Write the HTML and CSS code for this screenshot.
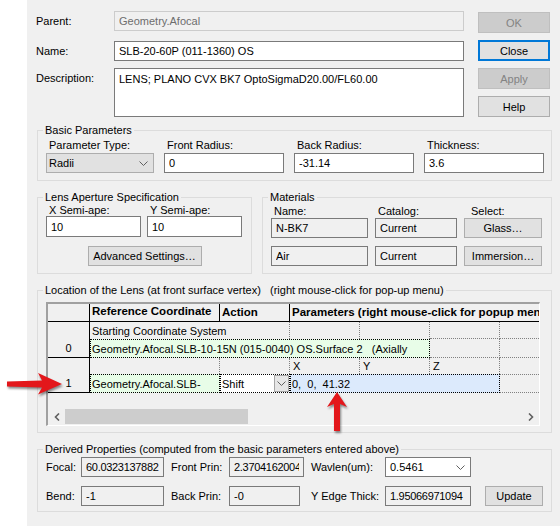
FILE: index.html
```html
<!DOCTYPE html>
<html lang="en">
    <head>
        <meta charset="UTF-8">
        <meta name="viewport" content="width=device-width, initial-scale=1.0">
        <title>Lens Properties</title>
        <link rel="stylesheet" href="styles.css">
    </head>
    <body>
        <div class="page">
            <div class="dialog">
                <div class="top">
                    <div class="fields">
                        <div class="row">
                            <label class="lbl">Parent:</label>
                            <input class="edit off" value="Geometry.Afocal" disabled>
                        </div>
                        <div class="row gap-name">
                            <label class="lbl">Name:</label>
                            <input class="edit" value="SLB-20-60P (011-1360) OS">
                        </div>
                        <div class="row gap-desc">
                            <label class="lbl">Description:</label>
                            <textarea class="edit memo">LENS; PLANO CVX BK7 OptoSigmaD20.00/FL60.00</textarea>
                        </div>
                    </div>
                    <div class="buttons">
                        <button class="btn" disabled>OK</button>
                        <button class="btn default">Close</button>
                        <button class="btn" disabled>Apply</button>
                        <button class="btn">Help</button>
                    </div>
                </div>

                <div class="groups">
                    <!-- basic parameters -->
                    <div class="group basic">
                        <div class="legend">Basic Parameters</div>
                        <div class="basic-grid">
                            <div class="cap">Parameter Type:</div>
                            <div class="cap">Front Radius:</div>
                            <div class="cap">Back Radius:</div>
                            <div class="cap">Thickness:</div>
                            <div class="combo">
                                <span>Radii</span>
                                <svg class="chev" viewBox="0 0 9 5"><polyline points="0.5,0.5 4.5,4.5 8.5,0.5" fill="none" stroke="#606060"/></svg>
                            </div>
                            <input class="edit" value="0">
                            <input class="edit" value="-31.14">
                            <input class="edit" value="3.6">
                        </div>
                    </div>

                    <div class="pair">
                        <div class="group aperture">
                            <div class="legend">Lens Aperture Specification</div>
                            <div class="ap-grid">
                                <div class="cap">X Semi-ape:</div>
                                <div class="cap">Y Semi-ape:</div>
                                <input class="edit" value="10">
                                <input class="edit" value="10">
                            </div>
                            <button class="btn wide-btn">Advanced Settings…</button>
                        </div>
                        <div class="group materials">
                            <div class="legend">Materials</div>
                            <div class="mat-grid">
                                <div class="cap">Name:</div>
                                <div class="cap">Catalog:</div>
                                <div class="cap sel-cap">Select:</div>
                                <input class="edit ro" value="N-BK7" readonly>
                                <input class="edit ro" value="Current" readonly>
                                <button class="btn">Glass…</button>
                                <input class="edit ro second" value="Air" readonly>
                                <input class="edit ro second" value="Current" readonly>
                                <button class="btn second">Immersion…</button>
                            </div>
                        </div>
                    </div>

                    <!-- location grid -->
                    <div class="group location">
                        <div class="legend">Location of the Lens (at front surface vertex)   (right mouse-click for pop-up menu)</div>
                        <div class="grid">
                            <div class="cells">
                                <div class="hc"></div>
                                <div class="hc">Reference Coordinate</div>
                                <div class="hc mid">Action</div>
                                <div class="hc mid span4 last">Parameters (right mouse-click for popup menu)</div>

                                <div class="rh rh0">0</div>
                                <div class="dc span2 gr-r">Starting Coordinate System</div>
                                <div class="dc gr-r"></div>
                                <div class="dc gr-r"></div>
                                <div class="dc gr-r gr-b"></div>
                                <div class="dc gr-b"></div>

                                <div class="dc span4 sel green">Geometry.Afocal.SLB-10-15N (015-0040) OS.Surface 2   (Axially</div>
                                <div class="dc gr-r gr-b"></div>
                                <div class="dc gr-b"></div>

                                <div class="rh rh1">1</div>
                                <div class="dc gr-r"></div>
                                <div class="dc gr-r"></div>
                                <div class="dc gr-r pad3">X</div>
                                <div class="dc gr-r pad3">Y</div>
                                <div class="dc gr-r pad3">Z</div>
                                <div class="dc"></div>

                                <div class="dc sel green">Geometry.Afocal.SLB-</div>
                                <div class="dc sel white shift">
                                    <span>Shift</span>
                                    <span class="drop"><svg class="chev" viewBox="0 0 9 5"><polyline points="0.5,0.5 4.5,4.5 8.5,0.5" fill="none" stroke="#606060"/></svg></span>
                                </div>
                                <div class="dc span3 sel blue">0,&nbsp; 0,&nbsp; 41.32</div>
                                <div class="dc gr-t gr-b"></div>
                            </div>
                            <div class="hscroll">
                                <span class="sb-arrow"><svg width="6" height="8" viewBox="0 0 6 8"><polyline points="5,0.5 1.5,4 5,7.5" fill="none" stroke="#606060" stroke-width="1.6"/></svg></span>
                                <span class="thumb"></span>
                                <span class="sb-fill"></span>
                                <span class="sb-arrow"><svg width="6" height="8" viewBox="0 0 6 8"><polyline points="1,0.5 4.5,4 1,7.5" fill="none" stroke="#606060" stroke-width="1.6"/></svg></span>
                            </div>
                        </div>
                    </div>

                    <!-- derived -->
                    <div class="group derived">
                        <div class="legend">Derived Properties (computed from the basic parameters entered above)</div>
                        <div class="dv-grid">
                            <div class="dl">Focal:</div>
                            <input class="edit ro tight" value="60.0323137882" readonly>
                            <div class="dl pl">Front Prin:</div>
                            <input class="edit ro tight" value="2.37041620044" readonly>
                            <div class="dl pl">Wavlen(um):</div>
                            <div class="combo white">
                                <span>0.5461</span>
                                <svg class="chev" viewBox="0 0 9 5"><polyline points="0.5,0.5 4.5,4.5 8.5,0.5" fill="none" stroke="#606060"/></svg>
                            </div>

                            <div class="dl new-row">Bend:</div>
                            <input class="edit ro" value="-1" readonly>
                            <div class="dl pl">Back Prin:</div>
                            <input class="edit ro short" value="-0" readonly>
                            <div class="dl pl">Y Edge Thick:</div>
                            <input class="edit ro tight" value="1.95066971094" readonly>
                            <button class="btn upd">Update</button>
                        </div>
                    </div>
                </div>
            </div>

            <!-- red callout arrows -->
            <svg class="arrow arrow-left" width="70" height="32" viewBox="0 0 70 32">
                <polygon points="7,13.5 42,12.5 38,5 62,16 38,26.5 42,19.5 7,18.5" fill="#e3171b"/>
            </svg>
            <svg class="arrow arrow-up" width="34" height="48" viewBox="0 0 34 48">
                <polygon points="17,4 27,19 20,16 20,43 14,43 14,16 7,19" fill="#e3171b"/>
            </svg>
        </div>
    </body>
</html>
```

FILE: styles.css
```css
*{
    box-sizing: border-box;
    margin: 0;
    padding: 0;
}
body{
    background: #fff;
    font-family: "Liberation Sans", Arial, sans-serif;
    font-size: 11px;
    color: #000;
}
input, textarea, button{
    font: inherit;
    color: inherit;
}
.page{
    position: relative;
    width: 560px;
    height: 526px;
    overflow: hidden;
}
.dialog{
    width: 533px;
    height: 526px;
    margin-left: 27px;
    padding: 11px 8px 0 9px;
    background: #f0f0f0;
}

/* top fields + buttons */
.top{
    display: flex;
}
.row{
    display: flex;
    align-items: flex-start;
}
.gap-name{
    margin-top: 10px;
}
.gap-desc{
    margin-top: 7px;
}
.lbl{
    width: 78px;
    line-height: 20px;
}
.edit{
    height: 20px;
    padding: 0 4px;
    border: 1px solid #7a7a7a;
    background: #fff;
    outline: none;
}
.top .edit{
    width: 350px;
}
.off{
    border-color: #cccccc;
    background: #f0f0f0;
    color: #6d6d6d;
}
.memo{
    height: 49px;
    padding: 3px 4px;
    line-height: 14px;
    resize: none;
    overflow: hidden;
}
.ro{
    background: #f0f0f0;
}
.buttons{
    display: flex;
    flex-direction: column;
    gap: 7px;
    margin-left: 14px;
    padding-top: 1px;
}
.btn{
    width: 72px;
    height: 21px;
    border: 1px solid #adadad;
    background: #e1e1e1;
}
.btn:disabled{
    border-color: #bfbfbf;
    background: #cccccc;
    color: #838383;
}
.btn.default{
    border: 2px solid #0078d7;
}

/* group boxes */
.groups{
    width: 515px;
    margin-left: 1px;
}
.group{
    border: 1px solid #dcdcdc;
    padding: 0 8px 7px;
}
.legend{
    width: max-content;
    margin: -8px 0 0 -3px;
    padding: 0 2px;
    background: #f0f0f0;
    line-height: 15px;
    white-space: pre;
}
.basic{
    margin-top: 13px;
}
.cap{
    padding-left: 3px;
    line-height: 14px;
    margin-bottom: 1px;
}
.basic-grid{
    display: grid;
    grid-template-columns: 108px 120px 120px 120px;
    column-gap: 10px;
}
.combo{
    height: 20px;
    display: flex;
    align-items: center;
    justify-content: space-between;
    padding: 0 5px 0 2px;
    border: 1px solid #adadad;
    background: #e1e1e1;
}
.combo.white{
    padding-left: 4px;
    border-color: #7a7a7a;
    background: #fff;
}
.chev{
    width: 9px;
    height: 5px;
}

.pair{
    display: flex;
    gap: 10px;
    margin-top: 16px;
}
.aperture{
    width: 215px;
}
.materials{
    width: 290px;
}
.ap-grid{
    display: grid;
    grid-template-columns: 95px 95px;
    column-gap: 6px;
}
.ap-grid .cap{
    line-height: 11px;
    margin-bottom: 0;
}
.ap-grid .edit{
    height: 21px;
}
.wide-btn{
    display: block;
    width: 114px;
    height: 20px;
    margin: 9px auto 0;
}
.mat-grid{
    display: grid;
    grid-template-columns: 97px 82px 78px;
    column-gap: 7px;
}
.mat-grid .cap{
    line-height: 13px;
    margin-bottom: 0;
}
.mat-grid .sel-cap{
    padding-left: 7px;
}
.mat-grid .btn{
    width: auto;
    height: 20px;
}
.mat-grid .second{
    margin-top: 8px;
}

/* location grid */
.location{
    margin-top: 16px;
    padding-bottom: 6px;
}
.grid{
    width: 494px;
    height: 124px;
    margin-top: 4px;
    display: flex;
    flex-direction: column;
    border-top: 2px solid #a0a0a0;
    border-left: 2px solid #a0a0a0;
    border-right: 1px solid #fff;
    border-bottom: 1px solid #fff;
}
.cells{
    display: grid;
    grid-template-columns: 42px 130px 70px 70px 70px 70px 1fr;
    grid-template-rows: 18px 17px 19px 16px 19px;
}
.hc{
    padding: 1px 2px 0;
    background: #f0f0f0;
    border-right: 1px solid #000;
    border-bottom: 1px solid #000;
    font-weight: bold;
    font-size: 11.5px;
    line-height: 13px;
    white-space: nowrap;
    overflow: hidden;
}
.hc.mid{
    padding-top: 2px;
}
.hc.last{
    border-right: none;
}
.span2{
    grid-column: span 2;
}
.span3{
    grid-column: span 3;
}
.span4{
    grid-column: span 4;
}
.rh{
    grid-column: 1;
    display: flex;
    align-items: flex-end;
    justify-content: center;
    padding-bottom: 2px;
    line-height: 13px;
    background: #f0f0f0;
    border-right: 1px solid #000;
    border-bottom: 1px solid #000;
}
.rh0{
    grid-row: 2 / span 2;
}
.rh1{
    grid-row: 4 / span 2;
}
.dc{
    display: flex;
    align-items: center;
    padding-left: 2px;
    white-space: pre;
    overflow: hidden;
}
.pad3{
    padding-left: 3px;
}
.gr-r{
    border-right: 1px dotted #808080;
}
.gr-b{
    border-bottom: 1px dotted #808080;
}
.gr-t{
    border-top: 1px dotted #808080;
}
.sel{
    border: 1px dotted #000;
    padding-left: 1px;
}
.green{
    background: #e8fde8;
}
.blue{
    background: #dceafc;
}
.white{
    background: #fff;
}
.shift{
    justify-content: space-between;
}
.drop{
    width: 15px;
    height: 17px;
    display: flex;
    align-items: center;
    justify-content: center;
    border: 1px solid #a6a6a6;
    background: #e6e6e6;
}
.hscroll{
    margin-top: auto;
    height: 17px;
    display: flex;
    align-items: center;
    background: #f0f0f0;
}
.sb-arrow{
    width: 17px;
    height: 17px;
    display: flex;
    align-items: center;
    justify-content: center;
}
.thumb{
    width: 183px;
    height: 15px;
    background: #cdcdcd;
}
.sb-fill{
    flex: 1;
}

/* derived */
.derived{
    margin-top: 16px;
    padding-bottom: 5px;
}
.dv-grid{
    display: grid;
    grid-template-columns: 35px 83px 65px 75px 81px 86px 14px 58px;
    row-gap: 9px;
}
.dl{
    line-height: 20px;
    white-space: nowrap;
}
.dl.pl{
    padding-left: 7px;
}
.new-row{
    grid-column: 1;
}
.tight{
    letter-spacing: -0.3px;
}
.short{
    width: 71px;
}
.dv-grid .upd{
    grid-column: 8;
    width: 58px;
    height: 20px;
}

/* callout arrows */
.arrow{
    position: absolute;
    filter: drop-shadow(1px 2px 1px rgba(0, 0, 0, 0.45));
}
.arrow-left{
    left: 0;
    top: 368px;
}
.arrow-up{
    left: 320px;
    top: 388px;
}
```
